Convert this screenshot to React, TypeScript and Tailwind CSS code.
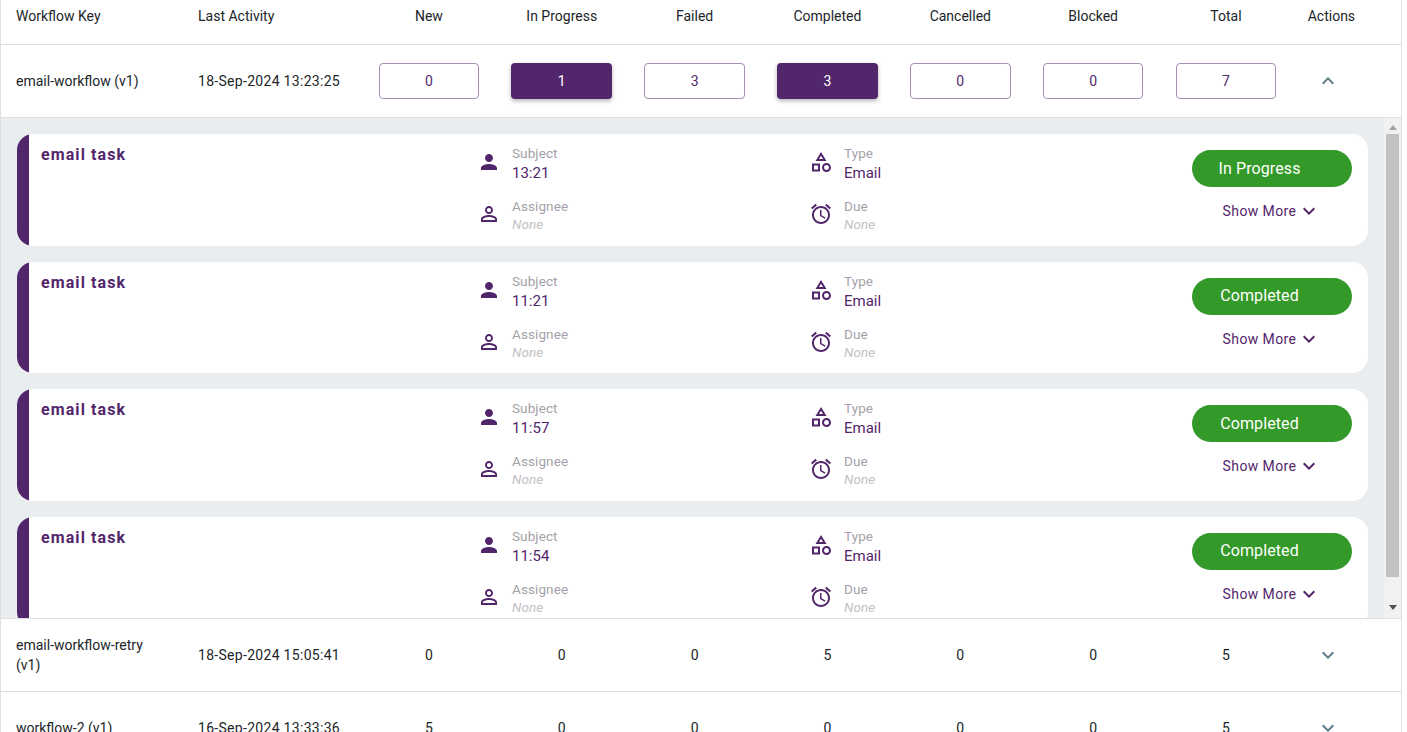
import React from 'react';

const columnGrid = 'grid grid-cols-[182px_164.5px_repeat(7,132.85px)_72px] items-center pl-[15px]';

const icons: Record<string, string> = {
  person: 'M12 12c2.21 0 4-1.79 4-4s-1.79-4-4-4-4 1.79-4 4 1.79 4 4 4zm0 2c-2.67 0-8 1.34-8 4v2h16v-2c0-2.66-5.33-4-8-4z',
  personOutline: 'M12 5.9c1.16 0 2.1.94 2.1 2.1s-.94 2.1-2.1 2.1S9.9 9.16 9.9 8s.94-2.1 2.1-2.1m0 9c2.97 0 6.1 1.46 6.1 2.1v1.1H5.9V17c0-.64 3.13-2.1 6.1-2.1M12 4C9.79 4 8 5.79 8 8s1.79 4 4 4 4-1.79 4-4-1.79-4-4-4zm0 9c-2.67 0-8 1.34-8 4v3h16v-3c0-2.66-5.33-4-8-4z',
  category: 'M12 2l-5.5 9h11L12 2zm0 3.84L13.93 9h-3.87L12 5.84zM17.5 13c-2.49 0-4.5 2.01-4.5 4.5s2.01 4.5 4.5 4.5 4.5-2.01 4.5-4.5-2.01-4.5-4.5-4.5zm0 7c-1.38 0-2.5-1.12-2.5-2.5s1.12-2.5 2.5-2.5 2.5 1.12 2.5 2.5-1.12 2.5-2.5 2.5zM3 21.5h8v-8H3v8zm2-6h4v4H5v-4z',
  alarm: 'M22 5.72l-4.6-3.86-1.29 1.53 4.6 3.86L22 5.72zM7.88 3.39L6.6 1.86 2 5.71l1.29 1.53 4.59-3.85zM12.5 8H11v6l4.75 2.85.75-1.23-4-2.37V8zM12 4c-4.97 0-9 4.03-9 9s4.03 9 9 9 9-4.03 9-9-4.03-9-9-9zm0 16c-3.87 0-7-3.13-7-7s3.13-7 7-7 7 3.13 7 7-3.13 7-7 7z',
  down: 'M16.59 8.59L12 13.17 7.41 8.59 6 10l6 6 6-6z',
  up: 'M12 8l-6 6 1.41 1.41L12 10.83l4.59 4.58L18 14z',
};

function Icon({ name, className }: { name: string; className: string }) {
  return (
    <svg viewBox="0 0 24 24" fill="currentColor" className={className}>
      <path d={icons[name]} />
    </svg>
  );
}

function CountBox({ value, filled }: { value: number; filled?: boolean }) {
  if (filled) {
    return (
      <div className="mx-auto flex h-9 w-[100.6px] items-center justify-center rounded bg-[#52266b] text-sm text-white shadow-[0_2px_4px_rgba(0,0,0,0.3)]">
        {value}
      </div>
    );
  }
  return (
    <div className="mx-auto flex h-9 w-[100.6px] items-center justify-center rounded border border-[#a78fb5] text-sm text-[#52266b]">
      {value}
    </div>
  );
}

function Info({ icon, label, value, none }: { icon: string; label: string; value: string; none?: boolean }) {
  return (
    <div className="flex items-center">
      <Icon name={icon} className="-mt-px h-6 w-6 shrink-0 text-[#52266b]" />
      <div className="ml-[11px]">
        <div className="text-[13.5px] leading-[20px] tracking-[0.1px] text-[#a59fa9]">{label}</div>
        {none ? (
          <div className="text-[13.5px] italic leading-[17px] tracking-[0.1px] text-[#c4c0c6]">{value}</div>
        ) : (
          <div className="mt-px text-[15px] leading-[18px] text-[#52266b]">{value}</div>
        )}
      </div>
    </div>
  );
}

function TaskCard({ subject, status }: { subject: string; status: string }) {
  return (
    <div className="flex h-[111.5px] shrink-0 overflow-hidden rounded-2xl bg-white">
      <div className="w-3 shrink-0 bg-[#52266b]" />
      <div className="w-[448px] shrink-0 pl-3 pt-[11px] text-base font-bold leading-5 tracking-[1.1px] text-[#52266b]">
        email task
      </div>
      <div className="grid w-[332px] shrink-0 content-start gap-y-[14px] pt-[9px]">
        <Info icon="person" label="Subject" value={subject} />
        <Info icon="personOutline" label="Assignee" value="None" none />
      </div>
      <div className="grid w-[383px] shrink-0 content-start gap-y-[14px] pt-[9px]">
        <Info icon="category" label="Type" value="Email" />
        <Info icon="alarm" label="Due" value="None" none />
      </div>
      <div className="flex w-[160px] shrink-0 flex-col items-center pt-4">
        <div className="flex h-[37px] w-40 items-center justify-center rounded-full bg-[#339928] pr-[25px] text-base tracking-[0.1px] text-white">
          {status}
        </div>
        <div className="mt-3 flex items-center text-sm tracking-[0.4px] text-[#52266b]">
          Show More
          <Icon name="down" className="ml-[1px] h-6 w-6" />
        </div>
      </div>
    </div>
  );
}

function SummaryRow({ name, activity, counts }: { name: string; activity: string; counts: number[] }) {
  return (
    <div className={`${columnGrid} h-[73px] shrink-0 border-b border-[#e0e0e0] text-sm text-[#212529]`}>
      <div className="pr-[30px] leading-5">{name}</div>
      <div className="tracking-[0.3px]">{activity}</div>
      {counts.map((c, i) => (
        <div key={i} className="text-center">{c}</div>
      ))}
      <div className="flex justify-center">
        <Icon name="down" className="h-6 w-6 text-[#607d8b]" />
      </div>
    </div>
  );
}

const headers = ['New', 'In Progress', 'Failed', 'Completed', 'Cancelled', 'Blocked', 'Total'];

const tasks = [
  { subject: '13:21', status: 'In Progress' },
  { subject: '11:21', status: 'Completed' },
  { subject: '11:57', status: 'Completed' },
  { subject: '11:54', status: 'Completed' },
];

export default function App() {
  return (
    <div className="h-[732px] w-[1407px] overflow-hidden bg-white font-['Roboto',sans-serif]">
      <div className="w-[1402px] border-x border-[#e0e0e0]">
        <div className={`${columnGrid} h-[45px] border-b border-[#e0e0e0] pb-[13px] text-sm text-[#212529]`}>
          <div>Workflow Key</div>
          <div>Last Activity</div>
          {headers.map(h => (
            <div key={h} className="text-center">{h}</div>
          ))}
          <div className="pl-[6px] text-center">Actions</div>
        </div>

        <div className={`${columnGrid} h-[73px] border-b border-[#e0e0e0] text-sm text-[#212529]`}>
          <div>email-workflow (v1)</div>
          <div className="tracking-[0.3px]">18-Sep-2024 13:23:25</div>
          <CountBox value={0} />
          <CountBox value={1} filled />
          <CountBox value={3} />
          <CountBox value={3} filled />
          <CountBox value={0} />
          <CountBox value={0} />
          <CountBox value={7} />
          <div className="flex justify-center">
            <Icon name="up" className="h-6 w-6 text-[#607d8b]" />
          </div>
        </div>

        <div className="flex h-[501px] border-b border-[#e0e0e0] bg-[#eaedf0]">
          <div className="flex min-w-0 flex-1 flex-col gap-4 overflow-hidden pl-4 pr-4 pt-4">
            {tasks.map((t, i) => (
              <TaskCard key={i} subject={t.subject} status={t.status} />
            ))}
          </div>
          <div className="flex w-[17px] shrink-0 flex-col items-center bg-[#f1f1f1]">
            <div className="mb-1 mt-[7px] h-0 w-0 border-x-[4px] border-b-[5px] border-x-transparent border-b-[#a3a3a3]" />
            <div className="h-[443px] w-[13px] bg-[#c1c1c1]" />
            <div className="mt-[28px] h-0 w-0 border-x-[4px] border-t-[5px] border-x-transparent border-t-[#505050]" />
          </div>
        </div>

        <SummaryRow name="email-workflow-retry (v1)" activity="18-Sep-2024 15:05:41" counts={[0, 0, 0, 5, 0, 0, 5]} />
        <SummaryRow name="workflow-2 (v1)" activity="16-Sep-2024 13:33:36" counts={[5, 0, 0, 0, 0, 0, 5]} />
      </div>
    </div>
  );
}
